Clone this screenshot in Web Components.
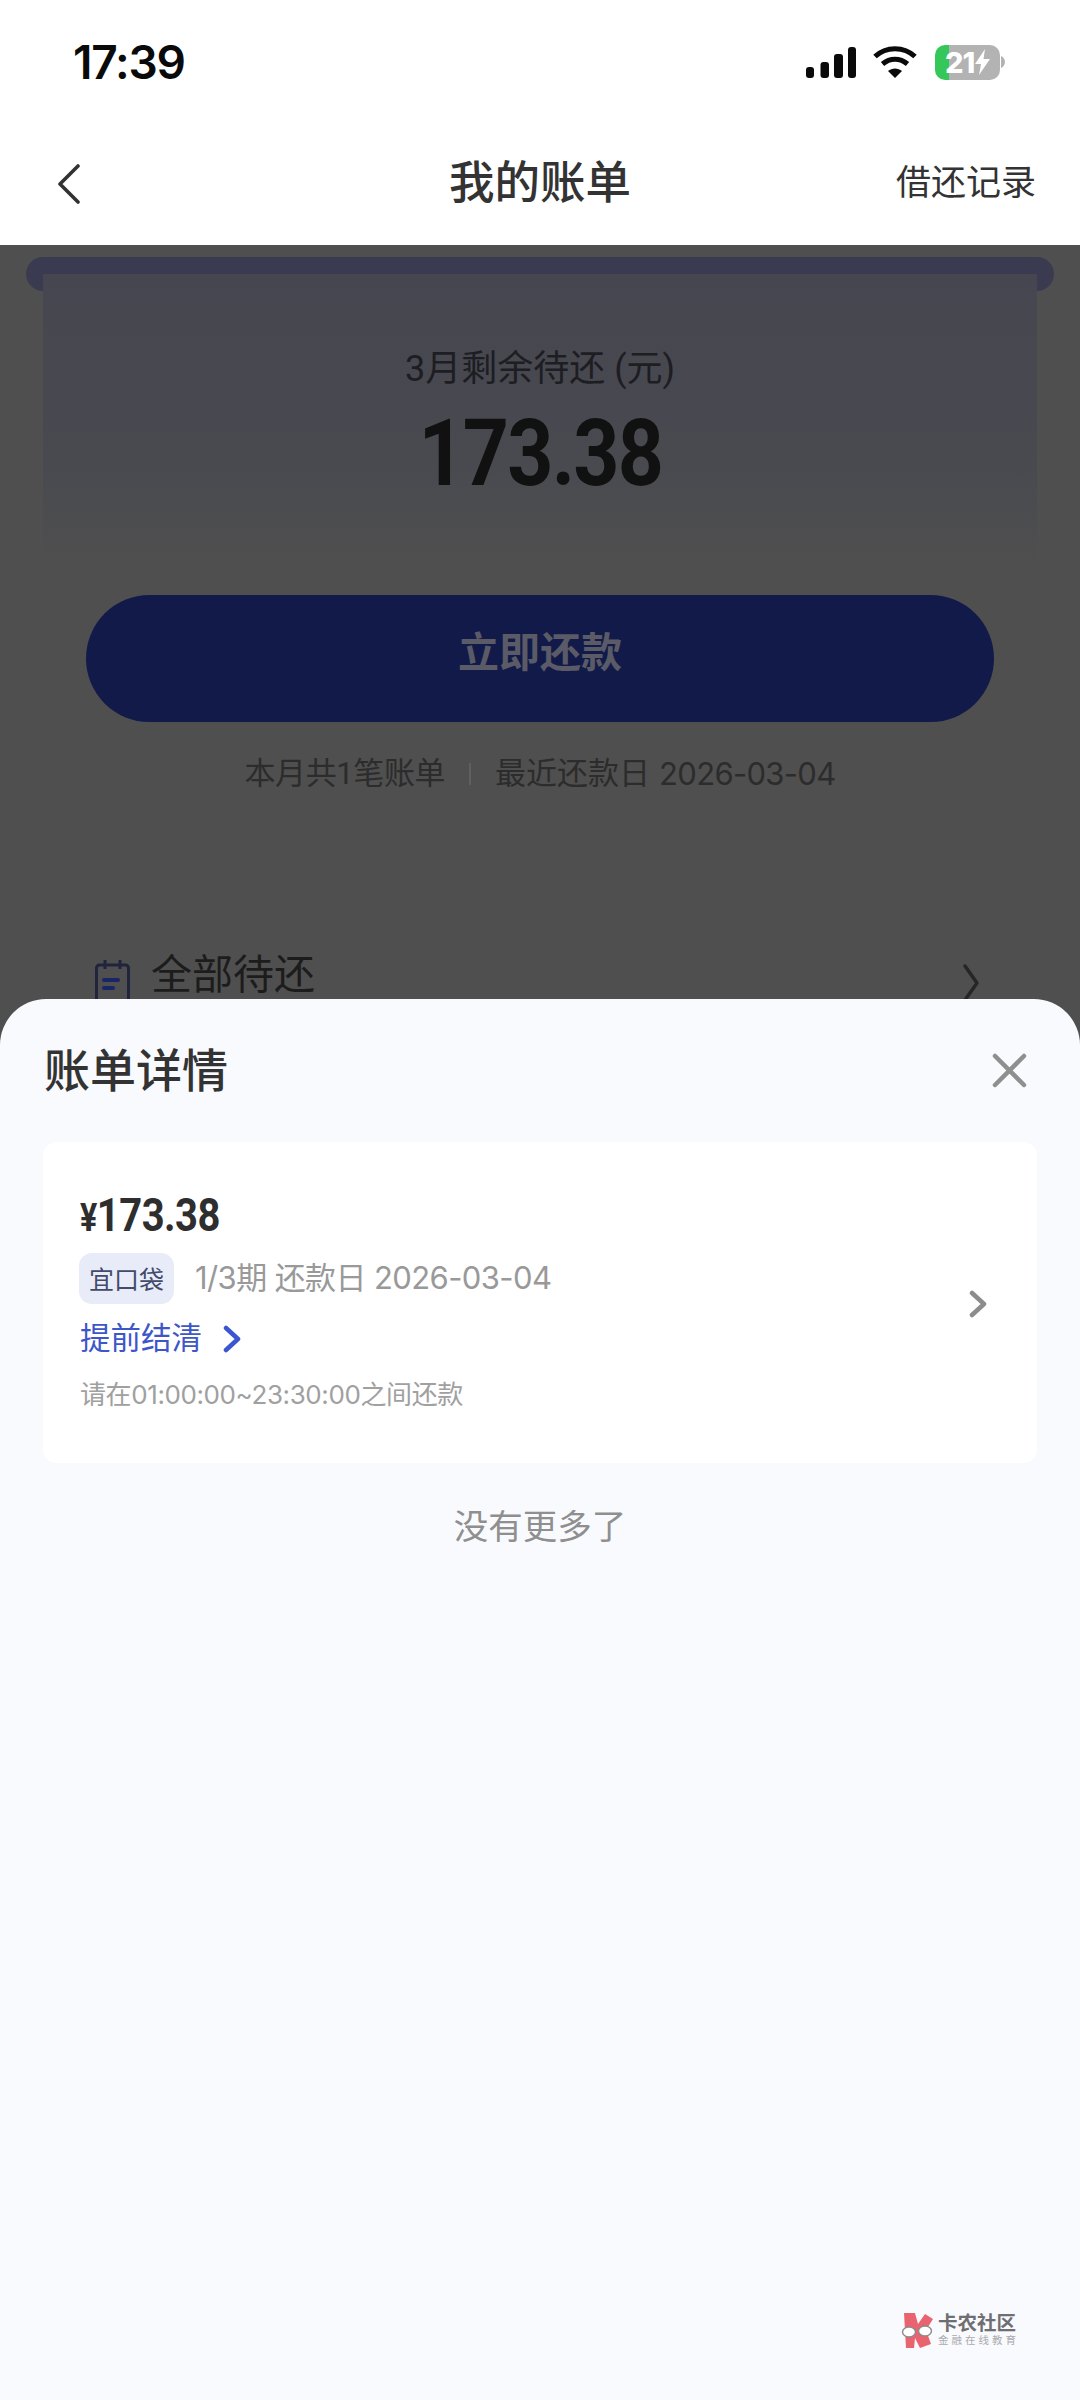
<!DOCTYPE html>
<html lang="zh-CN">
<head>
<meta charset="utf-8">
<title>我的账单</title>
<style>
  html, body { margin: 0; padding: 0; }
  body { width: 1080px; height: 2400px; overflow: hidden; background: #4f4f4f; font-family: Roboto, "Noto Sans CJK SC", sans-serif; }
</style>
</head>
<body>
<bill-page>
  <status-bar time="17:39" level="21"></status-bar>
  <nav-bar title="我的账单" action="借还记录"></nav-bar>
  <bill-summary month="3月剩余待还 (元)" amount="173.38" button="立即还款" count="本月共1笔账单" due="最近还款日" date="2026-03-04"></bill-summary>
  <list-row label="全部待还"></list-row>
  <bottom-sheet slot="sheet" heading="账单详情">
    <bill-card amount="173.38" tag="宜口袋" meta="1/3期 还款日 2026-03-04" link="提前结清" hint="请在01:00:00~23:30:00之间还款"></bill-card>
    <end-note>没有更多了</end-note>
  </bottom-sheet>
  <site-mark slot="sheet"></site-mark>
</bill-page>

<script>
const CJK = 'Roboto, "Noto Sans CJK SC", sans-serif';
const NUM = 'Inter, "Noto Sans CJK SC", sans-serif';

class BillPage extends HTMLElement {
  connectedCallback() {
    this.attachShadow({ mode: 'open' });
    this.shadowRoot.innerHTML = `
      <style>
        :host { display: block; position: relative; width: 1080px; height: 2400px; overflow: hidden; background: #4f4f4f; }
        .top { display: flex; flex-direction: column; }
      </style>
      <div class="top"><slot></slot></div>
      <slot name="sheet"></slot>
    `;
  }
}

class StatusBar extends HTMLElement {
  connectedCallback() {
    this.attachShadow({ mode: 'open' });
    this.shadowRoot.innerHTML = `
      <style>
        :host { display: flex; justify-content: space-between; align-items: center; height: 122px; box-sizing: border-box; padding: 2px 75px 0 73px; background: #fff; }
        .time { font: 600 46px/1 Inter, sans-serif; color: #0a0a0a; letter-spacing: -1.200px; }
        .icons { display: flex; align-items: center; gap: 17px; }
        .battery { width: 65px; height: 35px; border-radius: 10px; overflow: hidden; display: flex; align-items: center; padding-left: 10px; box-sizing: border-box;
          background: linear-gradient(90deg, #35c759 0 14px, #b3b3b3 14px); color: #fff; font: 800 29px/35px Inter, sans-serif; letter-spacing: -1px; }
        .wrap { display: flex; align-items: center; gap: 1px; margin-left: 1px; }
        svg { display: block; }
      </style>
      <span class="time">${this.getAttribute('time')}</span>
      <div class="icons">
        <svg width="50" height="31" viewBox="0 0 50 31" fill="#0a0a0a">
          <rect x="0" y="20" width="8" height="11" rx="3"/>
          <rect x="14.500" y="15" width="8.500" height="16" rx="3"/>
          <rect x="28" y="7" width="9" height="24" rx="3"/>
          <rect x="42" y="0" width="8" height="31" rx="3"/>
        </svg>
        <svg width="44" height="32" viewBox="0 0 44 32" fill="none" stroke="#0a0a0a" stroke-width="5">
          <path d="M2 10.500C13 0 31 0 42 10.500"/>
          <path d="M9.500 18C17 11.500 27 11.500 34.500 18"/>
          <path d="M15 25l7 7 7-7c-4-3.500-10-3.500-14 0z" fill="#0a0a0a" stroke="none"/>
        </svg>
        <div class="wrap">
          <div class="battery">
            <span>${this.getAttribute('level')}</span>
            <svg width="17" height="26" viewBox="0 0 17 26" fill="#fff"><path d="M11 0L1 15h6L5 26l11-16H9.500z"/></svg>
          </div>
          <svg width="4" height="12" viewBox="0 0 4 12" fill="#b3b3b3"><path d="M0 0c2.500 1 4 3.500 4 6s-1.500 5-4 6z"/></svg>
        </div>
      </div>
    `;
  }
}

class NavBar extends HTMLElement {
  connectedCallback() {
    this.attachShadow({ mode: 'open' });
    this.shadowRoot.innerHTML = `
      <style>
        :host { display: grid; grid-template-columns: 1fr auto 1fr; align-items: center; height: 123px; padding: 0 44px; background: #fff; font-family: ${CJK}; color: #333; }
        .title { font-size: 45.500px; font-weight: 500; line-height: 1; }
        .action { justify-self: end; font-size: 35px; line-height: 1; }
        svg { display: block; margin-left: 13px; }
      </style>
      <svg width="24" height="40" viewBox="0 0 24 40" fill="none" stroke="#333" stroke-width="3.600" stroke-linecap="round" stroke-linejoin="round"><path d="M21 2L3 20l18 18"/></svg>
      <span class="title">${this.getAttribute('title')}</span>
      <span class="action">${this.getAttribute('action')}</span>
    `;
  }
}

class BillSummary extends HTMLElement {
  connectedCallback() {
    this.attachShadow({ mode: 'open' });
    this.shadowRoot.innerHTML = `
      <style>
        :host { display: block; padding: 12px 26px 0; background: #4f4f4f; font-family: ${CJK}; }
        .lip { height: 34px; border-radius: 17px; background: #3a3b50; }
        .outer { margin: -17px 17px 0; height: 611px; box-sizing: border-box; display: flex; flex-direction: column; align-items: center; padding-top: 76px;
          background: linear-gradient(#45464f, #494a50 190px, #4f4f4f 290px); position: relative; }
        .month { font-size: 36px; line-height: 40px; color: #1d1d22; margin-top: -1px; }
        .amount { font-size: 92px; font-weight: 700; line-height: 92px; margin-top: 19px; color: #111; letter-spacing: -2px; transform: scaleX(.875); }
        .btn { margin-top: 95px; width: 908px; height: 127px; border-radius: 64px; background: #121a4a; color: #5a5b66; font-size: 41px; font-weight: 700; display: flex; justify-content: center; align-items: center; padding-bottom: 19px; box-sizing: border-box; }
        .note { margin-top: 32px; display: flex; align-items: center; font-size: 31px; line-height: 40px; color: #2c2c2c; }
        .count { letter-spacing: -.4px; }
        .date { font-family: ${NUM}; letter-spacing: -.7px; margin-left: 9px; }
        .sep { width: 2px; height: 22px; background: #5f5f5f; margin: 0 24px; }
      </style>
      <div class="lip"></div>
      <div class="outer">
        <span class="month">${this.getAttribute('month')}</span>
        <span class="amount">${this.getAttribute('amount')}</span>
        <div class="btn">${this.getAttribute('button')}</div>
        <div class="note"><span class="count">${this.getAttribute('count')}</span><i class="sep"></i><span>${this.getAttribute('due')}</span><span class="date">${this.getAttribute('date')}</span></div>
      </div>
    `;
  }
}

class ListRow extends HTMLElement {
  connectedCallback() {
    this.attachShadow({ mode: 'open' });
    this.shadowRoot.innerHTML = `
      <style>
        :host { display: flex; align-items: flex-start; padding: 68px 100px 0 95px; font-family: ${CJK}; color: #1c1c1c; }
        .label { font-size: 41px; line-height: 48px; margin-left: 21px; flex: 1; margin-top: -2px; }
        svg { display: block; }
      </style>
      <svg width="35" height="44" viewBox="0 0 35 44" fill="none" stroke="#20243c" stroke-width="3" style="margin-top:7px">
        <rect x="1.500" y="5" width="32" height="38" rx="3"/>
        <path d="M10 0v9M25 0v9"/>
        <path d="M9 20h14M9 28h9" stroke="#1a2566" stroke-width="4" stroke-linecap="round"/>
      </svg>
      <span class="label">${this.getAttribute('label')}</span>
      <svg width="18" height="40" viewBox="0 0 18 40" fill="none" stroke="#262626" stroke-width="3.500" stroke-linecap="round" stroke-linejoin="round" style="margin-top:10px"><path d="M3 3l12 17L3 37"/></svg>
    `;
  }
}

class BottomSheet extends HTMLElement {
  connectedCallback() {
    this.attachShadow({ mode: 'open' });
    this.shadowRoot.innerHTML = `
      <style>
        :host { display: block; position: absolute; left: 0; right: 0; top: 999px; bottom: 0; background: #f9fafe; border-radius: 46px 46px 0 0; font-family: ${CJK}; }
        header { display: flex; justify-content: space-between; align-items: center; height: 143px; box-sizing: border-box; padding: 0 53px 0 44px; }
        h2 { margin: 0; font-size: 46px; line-height: 1; font-weight: 500; color: #333; }
        svg { display: block; }
        .body { padding: 0 42px; }
      </style>
      <header>
        <h2>${this.getAttribute('heading')}</h2>
        <svg width="35" height="35" viewBox="0 0 35 35" fill="none" stroke="#8f8f8f" stroke-width="4.500" stroke-linecap="round"><path d="M3 3l29 29M32 3L3 32"/></svg>
      </header>
      <div class="body"><slot></slot></div>
    `;
  }
}

class BillCard extends HTMLElement {
  connectedCallback() {
    this.attachShadow({ mode: 'open' });
    const amount = this.getAttribute('amount');
    this.shadowRoot.innerHTML = `
      <style>
        :host { display: flex; align-items: center; height: 321px; box-sizing: border-box; padding: 0 50px 0 37px; background: #fff; border-radius: 14px; font-family: ${CJK}; margin: 0 1px; }
        .main { flex: 1; display: flex; flex-direction: column; align-items: flex-start; margin-bottom: 3px; }
        .amount { color: #2e2e2e; font: 700 47px/50px Roboto, sans-serif; letter-spacing: -.6px; transform: scaleX(.85); transform-origin: left; }
        .amount small { font-size: 38px; }
        .line { display: flex; align-items: center; gap: 21px; margin-top: 10px; }
        .tag { margin-left: -1px; width: 95px; height: 51px; box-sizing: border-box; display: flex; justify-content: center; align-items: center; background: #e8ecf8; border-radius: 13px; color: #434a6b; font-size: 25px; }
        .meta { font-family: ${NUM}; font-size: 31px; letter-spacing: -.6px; color: #999; line-height: 40px; }
        .link { display: flex; align-items: center; gap: 21px; margin-top: 13px; color: #3d56c8; font-size: 30.500px; line-height: 44px; }
        .hint { font-family: ${NUM}; margin-top: 16px; color: #a0a0a0; font-size: 26px; letter-spacing: -.4px; line-height: 36px; }
        svg { display: block; }
        .go { margin-top: 3px; }
      </style>
      <div class="main">
        <span class="amount"><small>¥</small>${amount}</span>
        <div class="line"><span class="tag">${this.getAttribute('tag')}</span><span class="meta">${this.getAttribute('meta')}</span></div>
        <div class="link"><span>${this.getAttribute('link')}</span>
          <svg width="18" height="28" viewBox="0 0 18 28" fill="none" stroke="#3b57d0" stroke-width="4.500" stroke-linecap="round" stroke-linejoin="round"><path d="M3 3l12 11L3 25"/></svg></div>
        <span class="hint">${this.getAttribute('hint')}</span>
      </div>
      <svg class="go" width="18" height="28" viewBox="0 0 18 28" fill="none" stroke="#8c8c8c" stroke-width="4.500" stroke-linecap="round" stroke-linejoin="round"><path d="M3 3l12 11L3 25"/></svg>
    `;
  }
}

class EndNote extends HTMLElement {
  connectedCallback() {
    this.attachShadow({ mode: 'open' });
    this.shadowRoot.innerHTML = `
      <style>
        :host { display: block; margin-top: 44px; text-align: center; font-family: ${CJK}; font-size: 34.500px; line-height: 40px; color: #8f8f8f; }
      </style>
      <slot></slot>
    `;
  }
}

class SiteMark extends HTMLElement {
  connectedCallback() {
    this.attachShadow({ mode: 'open' });
    this.shadowRoot.innerHTML = `
      <style>
        :host { display: flex; align-items: center; gap: 4px; position: absolute; left: 900px; top: 2312px; font-family: ${CJK}; }
        .txt { display: flex; flex-direction: column; }
        .a { font-size: 19.500px; line-height: 21px; font-weight: 700; color: #6f6f72; }
        .b { font-size: 10.500px; line-height: 14px; letter-spacing: 3px; color: #a9aaad; white-space: nowrap; }
        svg { display: block; }
      </style>
      <svg width="34" height="37" viewBox="0 0 34 37">
        <path d="M4 1h11l3 11 7-10 8 5-7 11 5 14-11 4-5-10-1 10H6z" fill="#e9646f"/>
        <ellipse cx="9" cy="20" rx="6.500" ry="5" fill="#fff" stroke="#8b8b8b" stroke-width="1.400"/>
        <ellipse cx="25" cy="19" rx="6.500" ry="5" fill="#fff" stroke="#8b8b8b" stroke-width="1.400"/>
      </svg>
      <div class="txt"><span class="a">卡农社区</span><span class="b">金融在线教育</span></div>
    `;
  }
}

customElements.define('bill-page', BillPage);
customElements.define('status-bar', StatusBar);
customElements.define('nav-bar', NavBar);
customElements.define('bill-summary', BillSummary);
customElements.define('list-row', ListRow);
customElements.define('bottom-sheet', BottomSheet);
customElements.define('bill-card', BillCard);
customElements.define('end-note', EndNote);
customElements.define('site-mark', SiteMark);
</script>
</body>
</html>
